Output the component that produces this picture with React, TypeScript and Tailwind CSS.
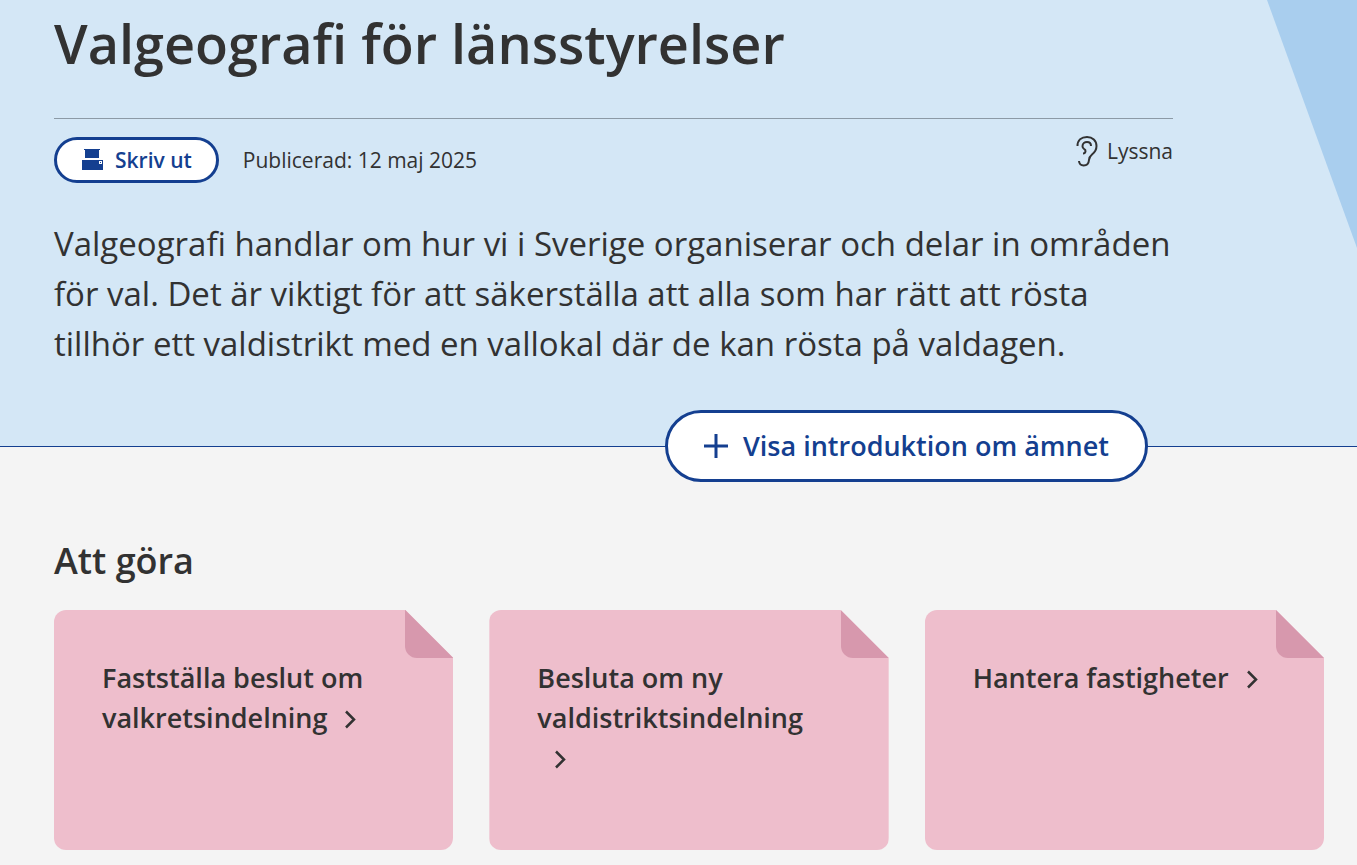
import { ReactNode } from "react";

const tasks = ["Fastställa beslut om valkretsindelning", "Besluta om ny valdistriktsindelning", "Hantera fastigheter"];

const PrinterIcon = () => (
  <svg className="h-6 w-6" viewBox="0 0 24 24" fill="currentColor" aria-hidden="true">
    <path d="M3 1h16v1h-1v8H4V2H3z" />
    <path fillRule="evenodd" d="M1 12h21v10H1zM18 13v3h3v-3z" />
    <path d="M19 14h1v1h-1z" />
  </svg>
);

const EarIcon = () => (
  <svg className="h-8 w-6" viewBox="0 0 24 32" fill="none" stroke="currentColor" strokeWidth="2" aria-hidden="true">
    <path d="M2.5 11C2.5 5 6.500 2 12 2s9.500 3.500 9.500 9c0 4-2 6.500-4.500 8.500-2 1.600-2.800 3-3 5.500C13.700 28.500 12 30.500 8.700 30.500c-3 0-4.500-1.800-4.700-4.500" />
    <path d="M16 11C16 8.300 14.200 7 12 7s-4.500 1.500-4.500 4.300c0 1.200.5 2 1.500 2.500 1.300.6 1.700 1.500 1.500 2.600-.2 1.400-1.200 2.100-2.500 2.100" />
  </svg>
);

const Chevron = () => (
  <svg className="ml-4 inline-block h-6 w-7" viewBox="0 0 28 24" fill="none" stroke="currentColor" strokeWidth="2.5" aria-hidden="true">
    <path d="M3 2.500l8 8-8 8" />
  </svg>
);

const TaskCard = ({ children }: { children: ReactNode }) => (
  <a
    href="#"
    className="relative block min-h-60 rounded-xl bg-[#eebecc] p-12 text-[27px] leading-10 font-semibold text-[#323232] [clip-path:polygon(0_0,calc(100%-48px)_0,100%_48px,100%_100%,0_100%)]"
  >
    {/* Folded corner */}
    <span className="absolute top-0 right-0 h-12 w-12 rounded-bl-xl bg-[#d798ad]"></span>
    {children}
    <Chevron />
  </a>
);

const App = () => {
  return (
    <div className="min-h-screen bg-[#f4f4f4] font-['Open_Sans',sans-serif] text-[#323232]">
      <header className="relative border-b border-[#143f90] bg-[#d4e7f6] pr-46 pb-[77px] pl-[54px]">
        {/* Decorative wedge in the top right corner */}
        <svg className="absolute top-0 right-0 h-62 w-[90px]" viewBox="0 0 90 248" fill="#a9ceee" aria-hidden="true">
          <path d="M0 0h90v248z" />
        </svg>

        <h1 className="pt-2 pb-10 text-[54px] leading-[70px] font-semibold">Valgeografi för länsstyrelser</h1>

        <div className="flex items-start justify-between border-t border-[#8c9aa6] pt-4">
          <div className="flex items-center gap-6 pt-0.5">
            <button type="button" className="flex h-[46px] items-center gap-2.5 rounded-full border-3 border-[#143f90] bg-white px-6 text-[21px] leading-8 font-semibold text-[#143f90]">
              <PrinterIcon />
              Skriv ut
            </button>
            <p className="text-[21px] leading-8">Publicerad: 12 maj 2025</p>
          </div>
          <a href="#" className="flex items-center gap-2 text-[21px] leading-8">
            <EarIcon />
            Lyssna
          </a>
        </div>

        <p className="mt-9 text-[33px] leading-[50px]">
          Valgeografi handlar om hur vi i Sverige organiserar och delar in områden för val. Det är viktigt för att säkerställa att alla som har rätt att rösta tillhör ett valdistrikt med en vallokal där de kan rösta på valdagen.
        </p>
      </header>

      <div className="relative -mt-[37px] flex justify-end pr-[209px]">
        <button type="button" className="flex h-[72px] items-center gap-[15px] rounded-full border-3 border-[#143f90] bg-white px-9 text-[27px] font-semibold text-[#143f90]">
          <svg className="h-6 w-6" viewBox="0 0 24 24" fill="none" stroke="currentColor" strokeWidth="3" aria-hidden="true">
            <path d="M12 0v24M0 12h24" />
          </svg>
          Visa introduktion om ämnet
        </button>
      </div>

      <main className="pt-[53px] pr-[33px] pb-4 pl-[54px]">
        <h2 className="text-4xl leading-[52px] font-semibold">Att göra</h2>
        <div className="mt-[23px] grid grid-cols-3 gap-9">
          {tasks.map((task) => (
            <TaskCard key={task}>{task}</TaskCard>
          ))}
        </div>
      </main>
    </div>
  );
};

export default App;
